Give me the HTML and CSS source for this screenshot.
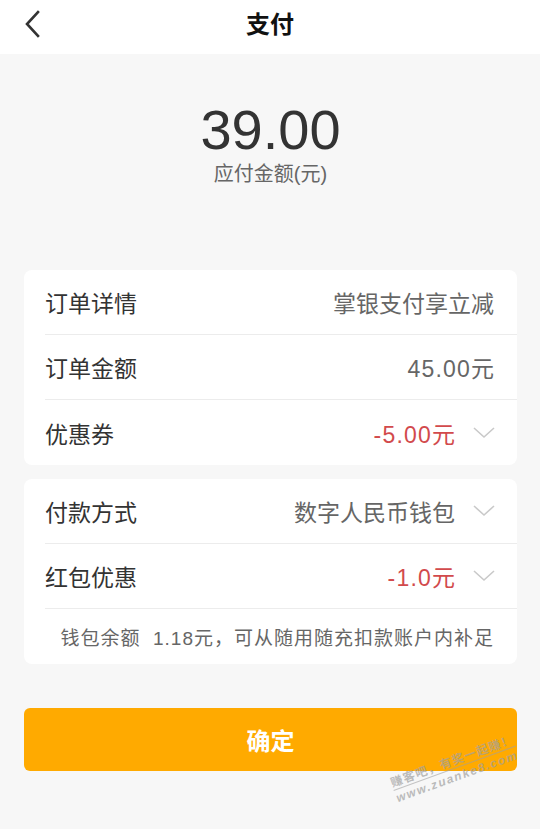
FILE: index.html
```html
<!DOCTYPE html>
<html lang="zh-CN">
<head>
<meta charset="utf-8">
<title>支付</title>
<link rel="stylesheet" href="styles.css">
</head>
<body>
<div class="page">
  <header class="topbar">
    <span class="back">
      <svg width="20" height="28" viewBox="0 0 20 28"><path d="M15 2 L4 14 L15 26" fill="none" stroke="#333" stroke-width="2.6" stroke-linecap="square"/></svg>
    </span>
    <h1 class="title">支付</h1>
  </header>
  <main class="content">
    <section class="amount">
      <div class="amount-value">39.00</div>
      <div class="amount-label">应付金额(元)</div>
    </section>

    <section class="card">
      <div class="row">
        <span class="label">订单详情</span>
        <span class="value">掌银支付享立减</span>
      </div>
      <div class="row">
        <span class="label">订单金额</span>
        <span class="value"><span class="num">45.00</span>元</span>
      </div>
      <div class="row">
        <span class="label">优惠券</span>
        <span class="value red"><span class="num">-5.00</span>元</span>
        <svg class="chev" width="24" height="14" viewBox="0 0 24 14"><path d="M2 2 L12 11 L22 2" fill="none" stroke="#c9c9c9" stroke-width="1.6"/></svg>
      </div>
    </section>

    <section class="card">
      <div class="row">
        <span class="label">付款方式</span>
        <span class="value">数字人民币钱包</span>
        <svg class="chev" width="24" height="14" viewBox="0 0 24 14"><path d="M2 2 L12 11 L22 2" fill="none" stroke="#c9c9c9" stroke-width="1.6"/></svg>
      </div>
      <div class="row">
        <span class="label">红包优惠</span>
        <span class="value red"><span class="num">-1.0</span>元</span>
        <svg class="chev" width="24" height="14" viewBox="0 0 24 14"><path d="M2 2 L12 11 L22 2" fill="none" stroke="#c9c9c9" stroke-width="1.6"/></svg>
      </div>
      <div class="note">钱包余额&nbsp;&nbsp;1.18元，可从随用随充扣款账户内补足</div>
    </section>

    <button class="confirm">确定</button>
  </main>
  <div class="watermark">
    <div class="wm-line1">赚客吧，有奖一起赚！</div>
    <div class="wm-line2">www.zuanke8.com</div>
  </div>
</div>
</body>
</html>
```

FILE: styles.css
```css
* { box-sizing: border-box; }
html, body {
  margin: 0;
  padding: 0;
  background: #f7f7f7;
  font-family: "Liberation Sans", "Noto Sans CJK SC", sans-serif;
}
.page {
  position: relative;
  width: 540px;
  min-height: 829px;
  overflow: hidden;
}
.topbar {
  height: 54px;
  background: #fff;
  display: flex;
  align-items: center;
  justify-content: center;
  position: relative;
}
.back {
  position: absolute;
  left: 23px;
  top: 10px;
  display: flex;
}
.title {
  margin: 0;
  font-size: 24px;
  font-weight: 700;
  color: #111;
  line-height: 1;
  margin-top: -4px;
}
.content {
  padding: 0 23px 0 24px;
  display: flex;
  flex-direction: column;
}
.amount {
  display: flex;
  flex-direction: column;
  align-items: center;
  padding-top: 48px;
  height: 216px;
}
.amount-value {
  font-size: 56px;
  color: #333;
  line-height: 56px;
}
.amount-label {
  margin-top: 3px;
  font-size: 20px;
  color: #666;
  line-height: 26px;
}
.card {
  background: #fff;
  border-radius: 8px;
  margin-bottom: 14px;
  padding-left: 21px;
}
.row {
  height: 65px;
  display: flex;
  align-items: center;
  border-bottom: 1px solid #ececec;
  padding-right: 23px;
}
.card .row:last-child { border-bottom: none; }
.label {
  font-size: 23px;
  color: #333;
  flex: 1;
}
.value {
  font-size: 23px;
  color: #666;
}
.num {
  letter-spacing: 1.2px;
}
.value.red { color: #d24a4c; }
.chev {
  margin-left: 17px;
  margin-right: -2px;
}
.note {
  height: 55px;
  display: flex;
  align-items: center;
  justify-content: flex-end;
  padding-right: 23px;
  font-size: 19px;
  letter-spacing: 1px;
  color: #666;
}
.confirm {
  margin-top: 30px;
  height: 63px;
  border: none;
  border-radius: 6px;
  background: #ffaa00;
  color: #fff;
  font-family: "Noto Sans CJK SC", sans-serif;
  font-size: 24px;
  font-weight: 700;
  padding: 0;
}
.watermark {
  position: absolute;
  left: 388px;
  top: 775px;
  transform: rotate(-20deg);
  transform-origin: left top;
  color: rgba(160, 160, 160, 0.7);
  font-size: 12px;
  font-weight: 700;
  line-height: 16px;
}
.wm-line1 {
  border-bottom: 1px solid rgba(160, 160, 160, 0.6);
  font-family: "Noto Sans CJK SC", sans-serif;
  letter-spacing: 1px;
}
.wm-line2 {
  font-family: "Liberation Sans", sans-serif;
  font-style: italic;
  letter-spacing: 1.5px;
}
```
